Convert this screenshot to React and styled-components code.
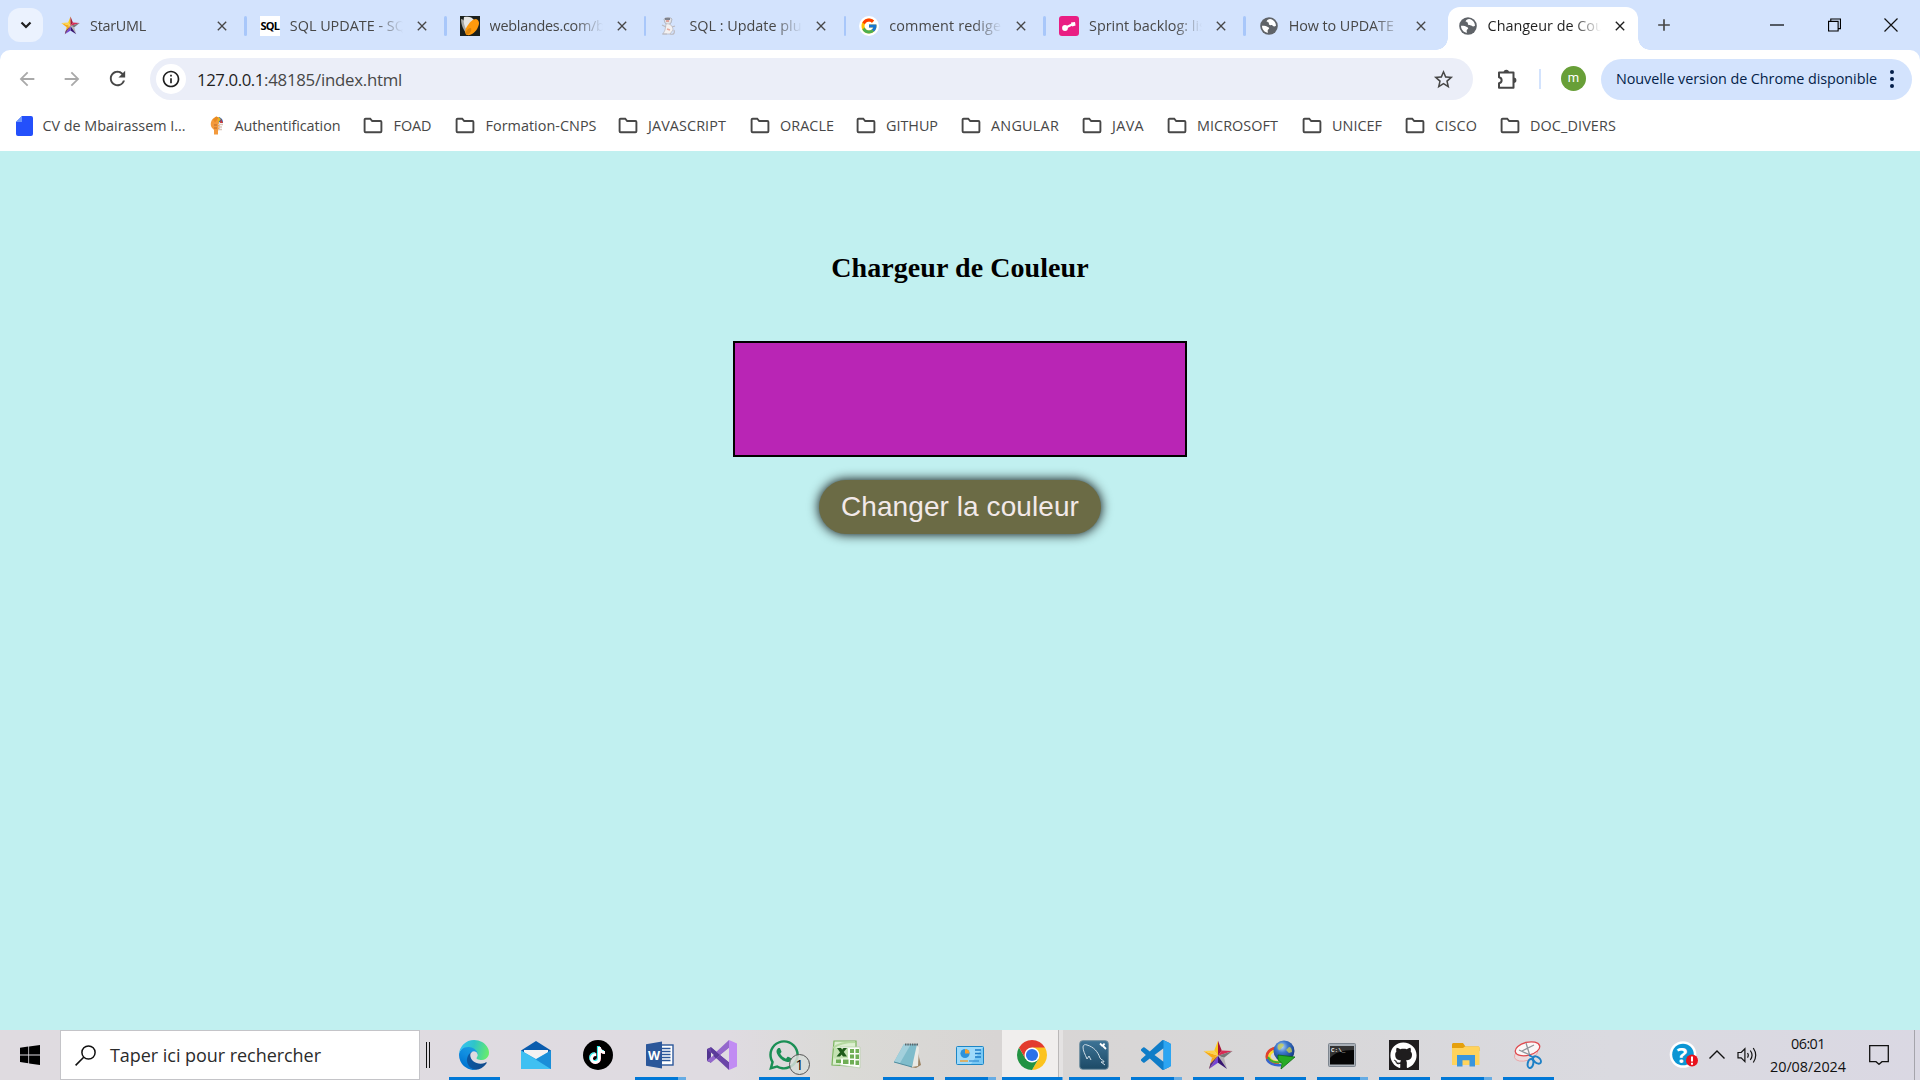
import React, { useLayoutEffect, useRef, useState } from "react";
import styled, { createGlobalStyle, css } from "styled-components";
import { FcGoogle } from "react-icons/fc";
import { FaWhatsapp, FaTiktok, FaGithub } from "react-icons/fa";
import { MdArrowBack, MdArrowForward, MdRefresh, MdInfoOutline, MdStarBorder, MdClose, MdAdd } from "react-icons/md";

const GlobalStyle = createGlobalStyle`
  * { box-sizing: border-box; }
  html, body { margin: 0; padding: 0; overflow: hidden; }
  body { background: #d3e3fd; font-family: "Open Sans", "Noto Sans", sans-serif; }
  svg { display: block; flex: none; }
`;

const Screen = styled.div`
  width: 1920px;
  height: 1080px;
  display: flex;
  flex-direction: column;
  background: #d3e3fd;
`;

/* ---------- text that tracks to a given width ---------- */

const FitSpan = styled.span`
  display: inline-block;
  white-space: pre;
`;

function Fit({ width, children }) {
  const ref = useRef(null);
  const [spacing, setSpacing] = useState(0);
  useLayoutEffect(() => {
    const natural = ref.current.getBoundingClientRect().width;
    setSpacing((width - natural) / children.length);
  }, [width, children]);
  return (
    <FitSpan ref={ref} style={{ letterSpacing: `${spacing}px` }}>
      {children}
    </FitSpan>
  );
}

/* ---------- tab strip ---------- */

const TabStrip = styled.div`
  height: 50px;
  display: flex;
  align-items: stretch;
  padding-left: 8px;
`;

const TabSearch = styled.button`
  width: 35px;
  height: 34px;
  margin: 8px 3px 0 0;
  padding: 0;
  border: 0;
  border-radius: 12px;
  background: #ebf2fe;
  display: flex;
  align-items: center;
  justify-content: center;
`;

const Tab = styled.div`
  position: relative;
  width: 199.8px;
  flex: none;
  display: flex;
  align-items: center;
  padding: 1px 0 0 14px;
  z-index: 0;
  color: #474747;
  ${(p) =>
    p.$active &&
    css`
      color: #1f1f1f;
      width: 201px;
      padding-left: 13px;
    `}
`;

const ActiveShape = styled.div`
  position: absolute;
  z-index: -1;
  left: 3px;
  width: 190px;
  top: 7px;
  bottom: 0;
  background: #fff;
  border-radius: 12px 12px 0 0;
  &::before,
  &::after {
    content: "";
    position: absolute;
    bottom: 0;
    width: 12px;
    height: 12px;
  }
  &::before {
    left: -12px;
    background: radial-gradient(circle at 0 0, transparent 11.5px, #fff 12px);
  }
  &::after {
    right: -12px;
    background: radial-gradient(circle at 100% 0, transparent 11.5px, #fff 12px);
  }
`;

const Favicon = styled.div`
  width: 20px;
  height: 20px;
  flex: none;
  display: flex;
  align-items: center;
  justify-content: center;
`;

const SqlBadge = styled(Favicon)`
  background: #fff;
  color: #000;
  font: 700 11px "Open Sans", sans-serif;
  letter-spacing: -0.8px;
`;

const GoogleBadge = styled(Favicon)`
  background: #fff;
  border-radius: 50%;
`;

const TabTitle = styled.div`
  width: 113px;
  margin-left: 10px;
  font-size: 14.4px;
  line-height: 24px;
  white-space: pre;
  overflow: hidden;
  mask-image: linear-gradient(to right, #000 75%, transparent 100%);
`;

const TabClose = styled.div`
  margin-left: 11px;
  width: 16px;
  display: flex;
  color: ${(p) => (p.$active ? "#1f1f1f" : "#474747")};
`;

const TabDivider = styled.div`
  margin-left: auto;
  width: 2.5px;
  height: 20px;
  margin-right: -1px;
  border-radius: 2px;
  background: #a8c7fa;
`;

const NewTab = styled.div`
  display: flex;
  align-items: center;
  margin-left: 8px;
  color: #474747;
`;

const WindowButtons = styled.div`
  margin-left: auto;
  display: flex;
  align-items: center;
  gap: 43.5px;
  padding-right: 22px;
`;

/* ---------- toolbar ---------- */

const Chrome = styled.div`
  background: #fff;
  height: 101px;
  border-radius: 10px 10px 0 0;
  display: flex;
  flex-direction: column;
`;

const Toolbar = styled.div`
  height: 58px;
  display: flex;
  align-items: center;
  padding: 0 8px 0 15px;
`;

const NavIcon = styled.div`
  width: 24px;
  display: flex;
  justify-content: center;
  margin-right: 21px;
  padding-bottom: 1px;
  color: ${(p) => (p.$dim ? "#a9a9a9" : "#474747")};
`;

const Omnibox = styled.div`
  width: 1323px;
  height: 42px;
  border-radius: 21px;
  background: #ebeef8;
  display: flex;
  align-items: center;
  padding: 0 18px 0 6px;
`;

const SiteInfo = styled.div`
  width: 30px;
  height: 30px;
  border-radius: 50%;
  background: #fff;
  display: flex;
  align-items: center;
  justify-content: center;
  color: #1f1f1f;
`;

const Url = styled.div`
  margin-left: 11px;
  padding-top: 1px;
  font-size: 16.8px;
  line-height: 24px;
  color: #474747;
  flex: 1;
  b {
    font-weight: 400;
    color: #1f1f1f;
  }
`;

const ExtensionSlot = styled.div`
  margin-left: 24px;
`;

const ToolbarDivider = styled.div`
  width: 2px;
  height: 20px;
  margin: 0 20px 0 21px;
  background: #d3e3fd;
`;

const Avatar = styled.div`
  width: 25px;
  height: 25px;
  margin-bottom: 2px;
  border-radius: 50%;
  background: #689f38;
  color: #fff;
  font: 400 13px/23px Roboto, sans-serif;
  text-align: center;
`;

const UpdatePill = styled.div`
  width: 311px;
  height: 41px;
  margin-left: auto;
  border-radius: 21px;
  background: #d3e3fd;
  color: #041e49;
  font-size: 14.4px;
  display: flex;
  align-items: center;
  justify-content: space-between;
  padding: 0 18px 1px 15px;
`;

const Bookmarks = styled.div`
  height: 43px;
  display: flex;
  align-items: center;
  padding: 0 0 8px 16px;
`;

const Bookmark = styled.div`
  width: ${(p) => p.$slot}px;
  flex: none;
  display: flex;
  align-items: center;
  gap: ${(p) => p.$gap || 10.5}px;
  font-size: 14.4px;
  line-height: 24px;
  color: #474747;
`;

/* ---------- page ---------- */

const Page = styled.main`
  flex: 1;
  background: #c1f0f0;
  display: flex;
  flex-direction: column;
  align-items: center;
  padding-top: 101px;
`;

const Title = styled.h1`
  margin: 0 0 57px;
  font: 700 28px/32px "Liberation Serif", "Times New Roman", serif;
  color: #000;
`;

const ColorBox = styled.div`
  width: 454px;
  height: 116px;
  border: 2px solid #000;
  background: #b925b5;
`;

const ChangeButton = styled.button`
  width: 282px;
  height: 54px;
  margin-top: 23px;
  padding: 0;
  border: 0;
  border-radius: 27px;
  background: #6b6b45;
  box-shadow: 0 0 12px #000;
  color: #f2e9e9;
  font: 400 28px "Liberation Sans", Arial, sans-serif;
`;

/* ---------- taskbar ---------- */

const Taskbar = styled.footer`
  height: 50px;
  display: flex;
  background: linear-gradient(90deg, #dfdbe0 0%, #dfdbe1 38%, #dadad6 44%, #d8d5d4 52%, #d8d7d8 66%, #dadae0 84%, #dad8e3 100%);
`;

const Start = styled.div`
  width: 60px;
  display: flex;
  align-items: center;
  justify-content: center;
`;

const SearchBox = styled.div`
  width: 360px;
  border: 1px solid #c4c4c8;
  background: #fff;
  display: flex;
  align-items: center;
  gap: 14px;
  padding-left: 14px;
  font-size: 18px;
  color: #2b2b2b;
`;

const Grip = styled.div`
  width: 4px;
  height: 26px;
  margin: 12px 19px 0 6px;
  border: solid #111;
  border-width: 0 1px;
`;

const Tasks = styled.div`
  display: flex;
  gap: 11px;
`;

const Task = styled.div`
  position: relative;
  width: 51px;
  display: flex;
  align-items: center;
  justify-content: center;
  border-bottom: 3px solid transparent;
  padding: 3px 2px 0 0;
  ${(p) => p.$open && css`border-bottom-color: #0078d7;`}
  ${(p) =>
    p.$stacked &&
    css`
      border-image: linear-gradient(90deg, #0078d7 41px, #66ace4 41px) 3;
      border-width: 0 0 3px;
    `}
  ${(p) =>
    p.$front &&
    css`
      width: 61px;
      margin: 0 -5px;
      background: linear-gradient(90deg, #f0eeed 56px, #bab8b8 56px, #bab8b8 57px, #e4e2e2 57px);
      border-image: linear-gradient(90deg, #0078d7 57px, #66ace4 57px) 3;
      border-width: 0 0 3px;
    `}
`;

const Count = styled.span`
  position: absolute;
  left: 30px;
  top: 24px;
  width: 21px;
  height: 21px;
  border: 1px solid #555;
  border-radius: 50%;
  background: rgba(215, 220, 216, 0.85);
  color: #000;
  font-size: 14px;
  line-height: 19px;
  text-align: center;
`;

const Tray = styled.div`
  margin-left: auto;
  display: flex;
  align-items: center;
`;

const VolumeIcons = styled.div`
  margin-left: 4px;
`;

const Clock = styled.div`
  width: 78px;
  margin: 0 22px 0 12px;
  display: flex;
  flex-direction: column;
  align-items: center;
  font-size: 14.4px;
  line-height: 23px;
  color: #111;
`;

const ShowDesktop = styled.div`
  width: 6px;
  height: 50px;
  margin-left: 25px;
  border-left: 1px solid #a5a4ab;
`;

/* ---------- drawings ---------- */

const StarUml = ({ size = 20 }) => (
  <svg width={size} height={size} viewBox="0 0 24 24">
    <path d="M12 .5 12 12.6 9 8.3z" fill="#f9c81f" />
    <path d="M12 .5 12 12.6 15 8.3z" fill="#a51639" />
    <path d="M15 8.3 23.6 8.7 12 12.6z" fill="#d82b54" />
    <path d="M23.6 8.7 16.8 14.2 12 12.6z" fill="#777" />
    <path d="M16.8 14.2 19.2 23.2 12 12.6z" fill="#b5b2b2" />
    <path d="M19.2 23.2 12 18.2 12 12.6z" fill="#35146f" />
    <path d="M12 18.2 4.8 23.2 12 12.6z" fill="#7443d6" />
    <path d="M4.8 23.2 7.2 14.2 12 12.6z" fill="#f3a91c" />
    <path d="M4.8 23.2 5.9 19 12 12.6z" fill="#4a2590" />
    <path d="M7.2 14.2 .4 8.7 12 12.6z" fill="#f9ab12" />
    <path d="M.4 8.7 9 8.3 12 12.6z" fill="#ffd34a" />
  </svg>
);

const WebLandes = () => (
  <svg width="20" height="20" viewBox="0 0 20 20">
    <rect width="20" height="20" fill="#1b201d" />
    <path d="M1 3c2 0 5 3 6 8l0 7C3 14 1 8 1 3z" fill="#a9aaa6" />
    <path d="M4 1c5-1 8 0 10 3l-7 11C4 10 3 5 4 1z" fill="#e6e6e3" />
    <path d="M16 3c3 1 4 4 2 8-2 5-7 9-11 8-3-2-2-6 1-10 2-3 5-6 8-6z" fill="#ff9a0c" />
    <path d="M6 19c-1-4 2-7 5-7 1 3-1 6-5 7z" fill="#dd8409" />
  </svg>
);

const Mouse = () => (
  <svg width="18" height="20" viewBox="0 0 18 20">
    <path d="M4 3c2-2 6-2 8 0l-1 4-3 2-3-2z" fill="#e4e4e8" stroke="#9fa2aa" strokeWidth=".7" />
    <path d="M5 3h5" stroke="#5f6470" strokeWidth="1.5" />
    <path d="M6 5h3" stroke="#d9796c" strokeWidth="1.2" />
    <path d="M6 8c4-1 7 2 7 6l-3 4H3l2-4z" fill="#f3f1f1" stroke="#b3b3ba" strokeWidth=".7" />
    <path d="M2 9l4 2M12 11l3-1M2 18h5M10 18c4 1 5-1 4-4" fill="none" stroke="#bbb9bf" strokeWidth="1.2" />
    <path d="M7 13l3 1" stroke="#e8a79b" strokeWidth="1.4" />
  </svg>
);

const Sprint = () => (
  <svg width="20" height="20" viewBox="0 0 20 20">
    <rect width="20" height="20" rx="3" fill="#e91e83" />
    <path d="M6 12 14 8" stroke="#fff" strokeWidth="2.4" />
    <circle cx="6" cy="12" r="2.9" fill="#fff" />
    <path d="M12 6.6l4-.6.6 3.6-3.4 1z" fill="#fff" />
  </svg>
);

const Globe = () => (
  <svg width="18" height="18" viewBox="0 0 18 18">
    <circle cx="9" cy="9" r="8.8" fill="#5f6368" />
    <path d="M2 8.8c1.8-.2 3.9-.3 5 .6.8.7 2.2.6 2.2 1.9 0 1-1.3 1-1.5 2-.1.7.2 1.5.1 2.6C4.7 15.4 2 12.6 2 8.8z" fill="#fff" />
    <path d="M10.1 2c3.3.5 5.900 3.300 5.900 6.700-1.300.9-2.400.9-3.200.1-.8-.9-2.500-.3-3.500-1.100-.9-.8 0-1.600-.7-2.300-.6-.6-1.900-.2-1.900-1 0-1.200 1.800-2.400 3.400-2.400z" fill="#fff" />
  </svg>
);

const CvFile = () => (
  <svg width="17" height="20" viewBox="0 0 17 20">
    <path d="M6 0h9a2 2 0 0 1 2 2v16a2 2 0 0 1-2 2H2a2 2 0 0 1-2-2V6z" fill="#2450fb" />
    <path d="M6 0v6H0z" fill="#6d97fb" />
  </svg>
);

const AuthMark = () => (
  <svg width="14" height="19" viewBox="0 0 14 19">
    <path d="M7 .5C2 2 0 6 1 10c.5 2 2 2.500 3 4v4.500h4v-4c2-1 2-3 1.500-6z" fill="#f39a3c" />
    <path d="M6 .5l3 1-4 5-2-3z" fill="#ea8a20" />
    <path d="M9 1c3 1 4 3 4 6L8 6z" fill="#2d62b5" />
    <path d="M8 1l3 2-3 4z" fill="#e2b522" />
    <path d="M11 3l2 4h-3z" fill="#d23a32" />
    <path d="M8 8.500h5M8 11h4M8 13.500h4" stroke="#d9c6bb" strokeWidth="1.4" />
    <path d="M4 9h3M4 12h3" stroke="#b8682c" strokeWidth="1" />
  </svg>
);

const Folder = () => (
  <svg width="20" height="17" viewBox="0 0 20 17">
    <path d="M2.6 1.7h4.6l2 2.3h8.2c.6 0 1 .4 1 1v9.3c0 .6-.4 1-1 1H2.6c-.6 0-1-.4-1-1V2.7c0-.6.4-1 1-1z" fill="none" stroke="#474747" strokeWidth="1.9" />
  </svg>
);

const Puzzle = () => (
  <svg width="21" height="21" viewBox="0 0 21 21">
    <path d="M2 3.5h14.5v15.2H2v-4.5c3.5-.6 3.5-5.4 0-6z" fill="none" stroke="#474747" strokeWidth="2" strokeLinejoin="round" />
    <path d="M6.6 3.5a2.700 2.700 0 0 1 5.400 0zM16.700 8.500a2.700 2.700 0 0 1 0 5.400z" fill="#474747" />
  </svg>
);

const Edge = () => (
  <svg width="30" height="30" viewBox="0 0 256 256">
    <defs>
      <linearGradient id="edgeA" x1="60" y1="180" x2="240" y2="180" gradientUnits="userSpaceOnUse">
        <stop offset="0" stopColor="#0c59a4" />
        <stop offset="1" stopColor="#114a8b" />
      </linearGradient>
      <linearGradient id="edgeB" x1="140" y1="70" x2="50" y2="230" gradientUnits="userSpaceOnUse">
        <stop offset="0" stopColor="#1b9de2" />
        <stop offset=".5" stopColor="#0f8ce0" />
        <stop offset="1" stopColor="#0074d0" />
      </linearGradient>
      <linearGradient id="edgeC" x1="20" y1="60" x2="250" y2="120" gradientUnits="userSpaceOnUse">
        <stop offset="0" stopColor="#35c1f1" />
        <stop offset=".45" stopColor="#2fc5c8" />
        <stop offset="1" stopColor="#66eb6e" />
      </linearGradient>
    </defs>
    <g transform="translate(-4.63 -4.92)">
      <path fill="url(#edgeA)" d="M235.68 195.53a93.73 93.73 0 0 1-10.54 4.71 101.87 101.87 0 0 1-35.9 6.46c-47.32 0-88.54-32.55-88.54-74.32A31.48 31.48 0 0 1 117.13 105.28c-42.8 1.8-53.8 46.4-53.8 72.53 0 73.88 68.09 81.37 82.76 81.37 7.91 0 19.84-2.3 27-4.56l1.31-.44a128.34 128.34 0 0 0 66.6-52.8 4 4 0 0 0-5.32-5.85z" />
      <path fill="url(#edgeB)" d="M110.34 246.34A79.2 79.2 0 0 1 87.6 225a80.72 80.72 0 0 1 29.53-120c3.12-1.47 8.45-4.13 15.54-4a32.35 32.35 0 0 1 25.69 13 31.88 31.88 0 0 1 6.36 18.66c0-.21 24.46-79.6-80-79.6-43.9 0-80 41.66-80 78.21a130.15 130.15 0 0 0 12.11 56 128 128 0 0 0 156.38 67.11 75.55 75.55 0 0 1-62.78-8z" />
      <path fill="url(#edgeC)" d="M156.94 153.78c-.81 1.05-3.3 2.5-3.3 5.66 0 2.61 1.7 5.12 4.72 7.23 14.38 10 41.49 8.68 41.56 8.68a59.56 59.56 0 0 0 30.27-8.35 61.38 61.38 0 0 0 30.43-52.88c.26-22.41-8-37.31-11.34-43.91C228.09 28.76 182.35 4.92 132.61 4.92a128 128 0 0 0-128 126.2c.48-36.54 36.8-66.05 80-66.05 3.5 0 23.46.34 42 10.07 16.34 8.58 24.9 18.94 30.85 29.21 6.18 10.67 7.28 24.15 7.28 29.52s-2.74 13.33-7.8 19.91z" />
    </g>
  </svg>
);

const Mail = () => (
  <svg width="30" height="28" viewBox="0 0 30 28">
    <path d="M0 9.5 15 0l15 9.5V14H0z" fill="#0b5cad" />
    <path d="M3 9h24v5L15 19 3 14z" fill="#f4f2f2" />
    <path d="M0 9.5 15 18l15-8.5V28H0z" fill="#2aa8e6" />
    <path d="M0 28V9.5L30 28z" fill="#3fc0f2" />
    <path d="M15 18.5 30 9.5V28z" fill="#1a8ed8" />
  </svg>
);

const TikTokDisc = styled.div`
  width: 30px;
  height: 30px;
  border-radius: 50%;
  background: #000;
  display: flex;
  align-items: center;
  justify-content: center;
  svg {
    color: #fff;
    filter: drop-shadow(-0.8px -0.6px 0 #25f4ee) drop-shadow(0.8px 0.6px 0 #fe2c55);
  }
`;

const Word = () => (
  <svg width="28" height="28" viewBox="0 0 28 28">
    <rect x="13" y="4" width="14" height="20" fill="#fff" stroke="#2b579a" strokeWidth="1.4" />
    <path d="M15 7.5h9.5M15 10.5h9.5M15 13.5h9.5M15 16.5h9.5M15 19.5h9.5" stroke="#2b579a" strokeWidth="1.4" />
    <path d="M0 3.2 16 .5v27L0 24.8z" fill="#2b579a" />
    <text x="8" y="18.5" textAnchor="middle" fontFamily="Open Sans, sans-serif" fontWeight="700" fontSize="12.5" fill="#fff">W</text>
  </svg>
);

const VisualStudio = () => (
  <svg width="30" height="30" viewBox="0 0 30 30">
    <path d="M0 9 4 7.2v15.6L0 21z" fill="#52358f" />
    <path d="M4 7.2 22 22v8L0 9.5z" fill="#6b45a8" />
    <path d="M4 22.8 22 8V0L0 20.5z" fill="#9468cc" />
    <path d="M4 7.2 13 15l-4 3.5L4 13z" fill="#5a3a9a" />
    <path d="M4 12.5 6.800 15 4 17.5z" fill="#dfdbe1" />
    <path d="M22 8v14l-8.5-7z" fill="#dfdbe1" />
    <path d="M22 0 30 3.5v23L22 30z" fill="#c18cf3" />
  </svg>
);

const Excel = () => (
  <svg width="30" height="30" viewBox="0 0 30 30">
    <path d="M3 1h22v5l-2 20L1 25z" fill="#dcefd0" stroke="#79b45c" strokeWidth="1.2" />
    <path d="M2 8c6-5 14-6 22-6" stroke="#b5d9a0" strokeWidth="2" fill="none" />
    <path d="M9 7h20v21L9 25z" fill="#fbfdf9" stroke="#b9cfad" strokeWidth=".8" />
    <g fill="#6fae55">
      <path d="M19 9h4v4h-4zM24.5 9h3.5v4h-3.5zM19 14.5h4v4h-4zM24.5 14.5h3.5v4.5h-3.5zM5 19.5h5v3.5H5zM12 19.5h5.5v4.5H12zM19 20h4v4.5h-4zM24.5 20.5h3.5v4.5h-3.5z" />
    </g>
    <path d="M3 8h14v10.5H3z" fill="#c4e2b2" />
    <path d="M6 8h4l6 8.5h-4zM12.5 8H16L9 16.5H5.5z" fill="#1f5c1b" />
  </svg>
);

const Notepad = () => (
  <svg width="28" height="27" viewBox="0 0 28 27">
    <path d="M22 3l5 20-5 3-6-1z" fill="#9c8262" />
    <path d="M20 3l5 2-1 19-6 1z" fill="#e9e9e4" />
    <path d="M10 2h13l-5 23L0 20z" fill="#7fbccb" />
    <path d="M10 2h7L6 21 0 20z" fill="#a3d0dc" />
    <path d="M11 2.5h13" stroke="#59656a" strokeWidth="2" strokeDasharray="1.5 .8" />
    <path d="M0 20l18 5" stroke="#4e8b9d" strokeWidth="1" />
  </svg>
);

const ControlPanel = () => (
  <svg width="28" height="19" viewBox="0 0 28 19">
    <rect x=".5" y=".5" width="27" height="18" rx="1" fill="#78c8f4" stroke="#1c86c6" />
    <path d="M1 1h26L15 18H1z" fill="#9edafa" />
    <circle cx="9" cy="7.5" r="4.6" fill="#2d93dc" />
    <path d="M9 7.5V2.9a4.6 4.6 0 0 1 4.6 4.6z" fill="#f9a02b" />
    <path d="M19 4h6M19 7.5h6M19 11h6" stroke="#1e7cc6" strokeWidth="1.5" />
    <path d="M4 15h8" stroke="#f59a20" strokeWidth="1.3" />
    <path d="M13 15h10" stroke="#2f8cd0" strokeWidth="1.2" />
  </svg>
);

const ChromeLogo = () => (
  <svg width="30" height="30" viewBox="0 0 48 48">
    <path d="M24 24 3.22 12A24 24 0 0 1 44.78 12z" fill="#e33b2e" />
    <path d="M24 12h20.78A24 24 0 0 1 24 48l10.39-18z" fill="#fcc31e" />
    <path d="M13.61 30 3.22 12A24 24 0 0 0 24 48l10.39-18z" fill="#229342" />
    <path d="M3.22 12 13.61 30 24 12z" fill="#e33b2e" />
    <circle cx="24" cy="24" r="12" fill="#fff" />
    <circle cx="24" cy="24" r="9.7" fill="#2b72ea" />
  </svg>
);

const Workbench = () => (
  <svg width="30" height="30" viewBox="0 0 30 30">
    <defs>
      <linearGradient id="wb" x1="0" y1="0" x2="0" y2="1">
        <stop offset="0" stopColor="#3d7396" />
        <stop offset="1" stopColor="#1c4a66" />
      </linearGradient>
    </defs>
    <rect x=".7" y=".7" width="28.6" height="28.6" rx="3" fill="url(#wb)" stroke="#6f8e9f" />
    <path d="M8 19C6 14 4 11 4 7c0-2 2-3 4-2 7 2 11 7 13 13 1 2 4 2 4 4l-3 0 4 3M8 19l2-3 2 4" fill="none" stroke="#cfdde6" strokeWidth="1" />
    <path d="M21 3.5l2.5 2.5M23 5l4 4M25.5 3.5l-2 3" stroke="#fff" strokeWidth="1.8" />
  </svg>
);

const VsCode = () => (
  <svg width="30" height="30" viewBox="0 0 24 24">
    <path fill="#0f7dc8" d="M23.15 2.587L18.21.21a1.494 1.494 0 0 0-1.705.29l-9.46 8.63-4.12-3.128a.999.999 0 0 0-1.276.057L.327 7.261A1 1 0 0 0 .326 8.74L3.899 12 .326 15.26a1 1 0 0 0 .001 1.479L1.65 17.94a.999.999 0 0 0 1.276.057l4.12-3.128 9.46 8.63a1.492 1.492 0 0 0 1.704.29l4.942-2.377A1.5 1.5 0 0 0 24 20.06V3.939a1.5 1.5 0 0 0-.85-1.352zm-5.146 14.861L10.826 12l7.178-5.448v10.896z" />
    <path fill="#2ca5f2" d="M18 .15 23.15 2.587A1.5 1.5 0 0 1 24 3.939V20.06a1.5 1.5 0 0 1-.85 1.36L18 23.85z" />
  </svg>
);

const Idm = () => (
  <svg width="30" height="30" viewBox="0 0 30 30">
    <defs>
      <radialGradient id="idm" cx=".4" cy=".3" r=".7">
        <stop offset="0" stopColor="#b9d9f5" />
        <stop offset=".4" stopColor="#3d78cc" />
        <stop offset="1" stopColor="#12357e" />
      </radialGradient>
    </defs>
    <path d="M11 8C5 9 1.5 13 2 17c.4 4 5 7 12 7" fill="none" stroke="#e2412c" strokeWidth="3" />
    <path d="M11 10.5C7 11 4 14 4.5 17c.4 3 4 5 10 5" fill="none" stroke="#f6dc2e" strokeWidth="2.5" />
    <path d="M2 19c1 4 7 7 14 6" fill="none" stroke="#3567cd" strokeWidth="2.6" />
    <path d="M3 17c2 4 7 6 13 5" fill="none" stroke="#3fae32" strokeWidth="2" />
    <circle cx="19" cy="11" r="10.5" fill="url(#idm)" />
    <path d="M13 5c2-2 5-2 6 0-1 2-3 3-4 5-2 0-3-2-2-5zM24 7c2 0 3 2 3 5l-3 1-3-3z" fill="#c7cd54" fillOpacity=".8" />
    <path d="M13 15l17 2-14 12 1-6-4-3z" fill="#27ab25" stroke="#0e6a14" strokeWidth=".8" />
  </svg>
);

const Cmd = () => (
  <svg width="28" height="24" viewBox="0 0 28 24">
    <rect x=".5" y=".5" width="27" height="23" rx="1" fill="#a9b0b8" stroke="#7e868f" />
    <rect x="2" y="3" width="24" height="18.5" fill="#050505" />
    <path d="M2 3h24v4C14 7 6 10 2 15z" fill="#343434" />
    <text x="3" y="8.8" fontFamily="Liberation Mono, monospace" fontSize="6" fontWeight="700" fill="#eee">C:\_</text>
  </svg>
);

const GithubTile = styled.div`
  width: 30px;
  height: 30px;
  background: #1f1d1e;
  color: #fff;
  display: flex;
  align-items: center;
  justify-content: center;
`;

const Explorer = () => (
  <svg width="28" height="24" viewBox="0 0 28 24">
    <path d="M0 1.5C0 .7.7 0 1.5 0H11l2.5 3.5H26c.8 0 1.5.7 1.5 1.5v3H0z" fill="#e5a00d" />
    <path d="M0 5h11l2-1.5h13.5c.6 0 1 .4 1 1V22H0z" fill="#ffd35c" />
    <path d="M5 12h18v11.5h-5.5v-6.2h-7v6.2H5z" fill="#3a96dd" />
  </svg>
);

const Snip = () => (
  <svg width="30" height="30" viewBox="0 0 30 30">
    <ellipse cx="13" cy="14" rx="12" ry="6.5" transform="rotate(-18 13 14)" fill="#eadadc" stroke="#eaa0a2" strokeWidth=".8" />
    <ellipse cx="14.5" cy="8.8" rx="12.5" ry="6.5" transform="rotate(-14 14.5 8.8)" fill="#fbf7f7" stroke="#df4a4e" strokeWidth="1.3" />
    <path d="M13 3l4 13M6 10l11 5M9 11l12-6" stroke="#90959b" strokeWidth="1.3" fill="none" />
    <ellipse cx="17.5" cy="23.5" rx="2.8" ry="4.6" transform="rotate(12 17.5 23.5)" fill="none" stroke="#1d80c6" strokeWidth="2" />
    <ellipse cx="24" cy="20" rx="2.8" ry="4.6" transform="rotate(-50 24 20)" fill="none" stroke="#1d80c6" strokeWidth="2" />
    <path d="M16 15l5 3" stroke="#1d80c6" strokeWidth="2" />
  </svg>
);

const Help = () => (
  <svg width="30" height="28" viewBox="0 0 30 28">
    <circle cx="14" cy="13.5" r="13.3" fill="#fff" />
    <circle cx="14" cy="13.5" r="10.8" fill="#0c96d4" />
    <text x="13" y="21.5" textAnchor="middle" fontFamily="Open Sans, sans-serif" fontWeight="700" fontSize="22" fill="#fff">?</text>
    <circle cx="23" cy="19.5" r="6" fill="#e8121d" />
    <path d="M23 15.5v5M23 21.8v2" stroke="#fff" strokeWidth="2" />
  </svg>
);

/* ---------- data ---------- */

const tabs = [
  { title: "StarUML", icon: <Favicon><StarUml size={19} /></Favicon>, fit: 56 },
  { title: "SQL UPDATE - SQL", icon: <SqlBadge>SQL</SqlBadge> },
  { title: "weblandes.com/b", icon: <Favicon><WebLandes /></Favicon>, fit: 115 },
  { title: "SQL : Update plus", icon: <Favicon><Mouse /></Favicon> },
  { title: "comment rediger", icon: <GoogleBadge><FcGoogle size={18} /></GoogleBadge>, fit: 118 },
  { title: "Sprint backlog: lis", icon: <Favicon><Sprint /></Favicon>, fit: 117 },
  { title: "How to UPDATE", icon: <Favicon><Globe /></Favicon>, fit: 105, last: true },
  { title: "Changeur de Coul", icon: <Favicon><Globe /></Favicon>, active: true },
];

const folders = [
  ["FOAD", 92, 38],
  ["Formation-CNPS", 162.5, 111],
  ["JAVASCRIPT", 132, 78],
  ["ORACLE", 106, 54],
  ["GITHUP", 105, 52],
  ["ANGULAR", 121, 68],
  ["JAVA", 85, 32],
  ["MICROSOFT", 135, 81],
  ["UNICEF", 103, 50],
  ["CISCO", 95, 42],
  ["DOC_DIVERS", 120, 86],
];

const tasks = [
  { icon: <Edge />, open: true },
  { icon: <Mail /> },
  { icon: <TikTokDisc><FaTiktok size={17} /></TikTokDisc> },
  { icon: <Word />, open: true, stacked: true },
  { icon: <VisualStudio /> },
  { icon: <FaWhatsapp size={34} color="#1a8f55" />, open: true, count: 1 },
  { icon: <Excel /> },
  { icon: <Notepad />, open: true },
  { icon: <ControlPanel />, open: true, stacked: true },
  { icon: <ChromeLogo />, front: true },
  { icon: <Workbench />, open: true },
  { icon: <VsCode />, open: true, stacked: true },
  { icon: <StarUml size={30} />, open: true },
  { icon: <Idm />, open: true },
  { icon: <Cmd />, open: true, stacked: true },
  { icon: <GithubTile><FaGithub size={27} /></GithubTile>, open: true },
  { icon: <Explorer />, open: true, stacked: true },
  { icon: <Snip />, open: true },
];

export default function App() {
  return (
    <Screen>
      <GlobalStyle />
      <TabStrip>
        <TabSearch>
          <svg width="12" height="8" viewBox="0 0 12 8">
            <path d="M1.5 1.5 6 6l4.5-4.5" fill="none" stroke="#1f1f1f" strokeWidth="2.2" />
          </svg>
        </TabSearch>
        {tabs.map((t) => (
          <Tab key={t.title} $active={t.active}>
            {t.active && <ActiveShape />}
            {t.icon}
            <TabTitle>{t.fit ? <Fit width={t.fit}>{t.title}</Fit> : t.title}</TabTitle>
            <TabClose $active={t.active}><MdClose size={16} /></TabClose>
            {!t.active && !t.last && <TabDivider />}
          </Tab>
        ))}
        <NewTab><MdAdd size={20} /></NewTab>
        <WindowButtons>
          <svg width="14" height="14" viewBox="0 0 14 14"><path d="M0 7h14" stroke="#000" strokeWidth="1.2" /></svg>
          <svg width="13" height="14" viewBox="0 0 14 14">
            <path d="M.6 3.1h10.3v10.3H.6zM3 3V.6h10.4v10.3H11" fill="none" stroke="#000" strokeWidth="1.2" />
          </svg>
          <svg width="14" height="14" viewBox="0 0 14 14"><path d="M.5.5l13 13M13.5.5l-13 13" stroke="#111" strokeWidth="1.2" /></svg>
        </WindowButtons>
      </TabStrip>

      <Chrome>
        <Toolbar>
          <NavIcon $dim><MdArrowBack size={22} /></NavIcon>
          <NavIcon $dim><MdArrowForward size={22} /></NavIcon>
          <NavIcon><MdRefresh size={23} /></NavIcon>
          <Omnibox>
            <SiteInfo><MdInfoOutline size={20} /></SiteInfo>
            <Url>
              <b><Fit width={67}>127.0.0.1</Fit></b>
              <Fit width={138}>:48185/index.html</Fit>
            </Url>
            <MdStarBorder size={23} color="#474747" />
          </Omnibox>
          <ExtensionSlot><Puzzle /></ExtensionSlot>
          <ToolbarDivider />
          <Avatar>m</Avatar>
          <UpdatePill>
            <Fit width={261}>Nouvelle version de Chrome disponible</Fit>
            <svg width="4" height="18" viewBox="0 0 4 18" fill="#041e49">
              <circle cx="2" cy="2" r="2" /><circle cx="2" cy="9" r="2" /><circle cx="2" cy="16" r="2" />
            </svg>
          </UpdatePill>
        </Toolbar>
        <Bookmarks>
          <Bookmark $slot={194} $gap={9.5}><CvFile /><Fit width={143}>CV de Mbairassem I...</Fit></Bookmark>
          <Bookmark $slot={153}><AuthMark /><Fit width={106}>Authentification</Fit></Bookmark>
          {folders.map(([name, slot, width]) => (
            <Bookmark key={name} $slot={slot}><Folder /><Fit width={width}>{name}</Fit></Bookmark>
          ))}
        </Bookmarks>
      </Chrome>

      <Page>
        <Title><Fit width={257.5}>Chargeur de Couleur</Fit></Title>
        <ColorBox />
        <ChangeButton><Fit width={238}>Changer la couleur</Fit></ChangeButton>
      </Page>

      <Taskbar>
        <Start>
          <svg width="20" height="20" viewBox="0 0 20 20">
            <path d="M0 2.8 8.3 1.6v7.9H0zM9.1 1.5 20 0v9.5H9.1zM0 10.4h8.3v7.9L0 17.1zM9.1 10.4H20V20L9.1 18.4z" />
          </svg>
        </Start>
        <SearchBox>
          <svg width="21" height="21" viewBox="0 0 21 21">
            <circle cx="13.5" cy="7.5" r="6.6" fill="none" stroke="#111" strokeWidth="1.5" />
            <path d="M8.7 12.3.6 20.4" stroke="#111" strokeWidth="1.6" />
          </svg>
          <Fit width={211}>Taper ici pour rechercher</Fit>
        </SearchBox>
        <Grip />
        <Tasks>
          {tasks.map((t, i) => (
            <Task key={i} $open={t.open} $stacked={t.stacked} $front={t.front}>
              {t.icon}
              {t.count && <Count>{t.count}</Count>}
            </Task>
          ))}
        </Tasks>
        <Tray>
          <Help />
          <VolumeIcons>
            <svg width="54" height="18" viewBox="2 0 54 18">
              <path d="M8.5 12.5 16 5l7.5 7.5" fill="none" stroke="#111" strokeWidth="1.4" />
              <path d="M37 6.5h3.2l3.7-3.7v12.8l-3.7-3.7h-3.2z" fill="none" stroke="#111" strokeWidth="1.2" />
              <path d="M46.5 7c1 1.5 1 3.2 0 4.7M49.3 4.5c2.2 3 2.2 6.5 0 9.5M52.3 2c3 4.5 3 10 0 14.5" fill="none" stroke="#111" strokeWidth="1.2" />
            </svg>
          </VolumeIcons>
          <Clock>
            <Fit width={34}>06:01</Fit>
            <Fit width={76}>20/08/2024</Fit>
          </Clock>
          <svg width="20" height="20" viewBox="0 0 20 20">
            <path d="M.7.7h18.6v16H13l-3 2.6-3-2.6H.7z" fill="none" stroke="#111" strokeWidth="1.3" />
          </svg>
          <ShowDesktop />
        </Tray>
      </Taskbar>
    </Screen>
  );
}
